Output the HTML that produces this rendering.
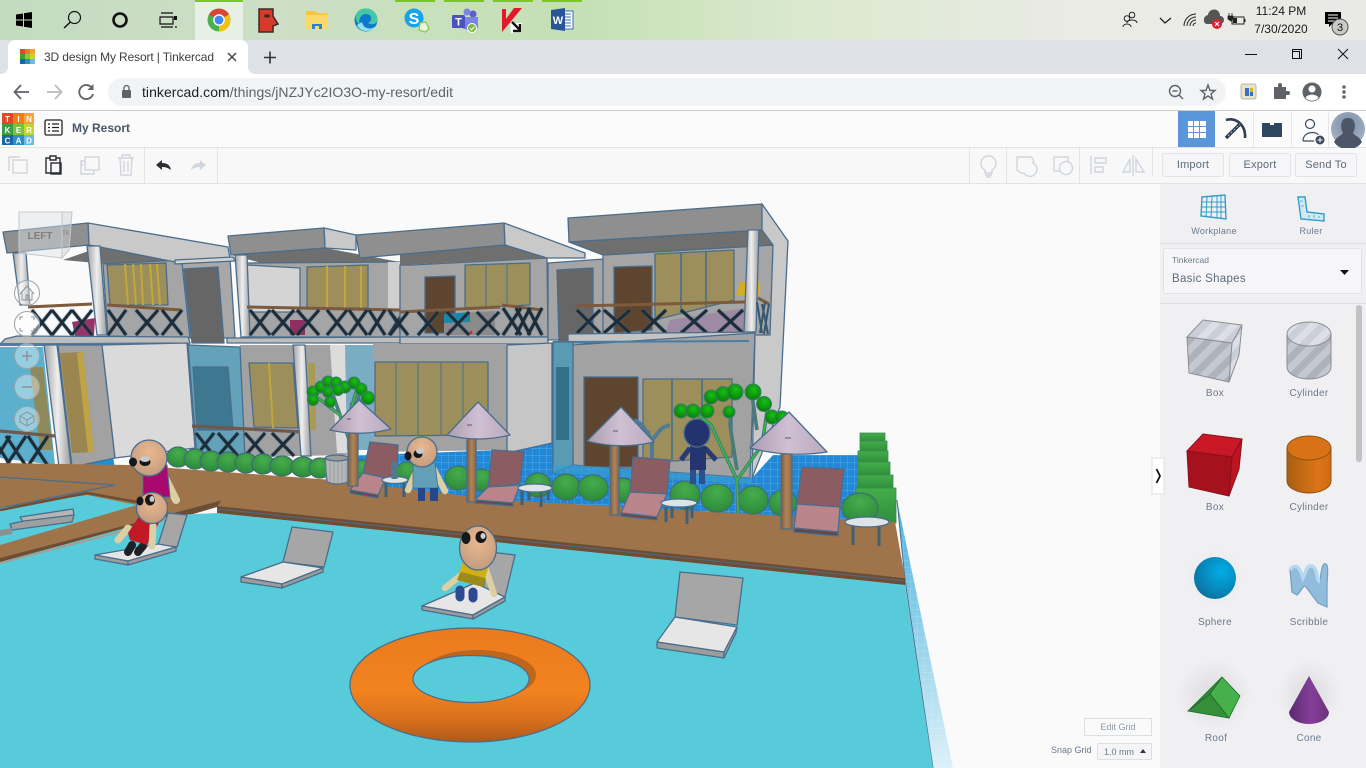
<!DOCTYPE html>
<html lang="en"><head><meta charset="utf-8"><title>3D design My Resort | Tinkercad</title>
<style>
html,body{margin:0;padding:0;width:1366px;height:768px;overflow:hidden;background:#fafafa}
svg{display:block;font-family:"Liberation Sans",sans-serif}
.s{stroke:#4a6d8c;stroke-width:1.3;stroke-linejoin:round}
.l{font-size:10px;fill:#6b7a8b;text-anchor:middle;letter-spacing:.3px}
.b{font-size:11px;fill:#5d6a7c;text-anchor:middle;letter-spacing:.2px}
.f{fill:none;stroke:#cfd6dd;stroke-width:1.4}
.d{fill:none;stroke:#2b2f33;stroke-width:1.4}
.x{fill:none;stroke:#1e2c38;stroke-width:3;filter:drop-shadow(0 0 .8px #3f6a8c)}
</style></head><body>
<svg width="1366" height="768" viewBox="0 0 1366 768" xmlns="http://www.w3.org/2000/svg">
<defs>
<linearGradient id="tb" x1="0" x2="1" y1="0" y2="0"><stop offset="0" stop-color="#c4dbc0"/><stop offset=".2" stop-color="#cddfc7"/><stop offset=".42" stop-color="#c4e0b4"/><stop offset=".6" stop-color="#dce9d0"/><stop offset=".8" stop-color="#ebebe6"/><stop offset="1" stop-color="#e9e9e5"/></linearGradient>
<linearGradient id="pil" x1="0" x2="1" y1="0" y2="0"><stop offset="0" stop-color="#a0a0a0"/><stop offset=".5" stop-color="#efefef"/><stop offset="1" stop-color="#9a9a9a"/></linearGradient>
<linearGradient id="pol" x1="0" x2="1" y1="0" y2="0"><stop offset="0" stop-color="#7d5c42"/><stop offset=".5" stop-color="#b08458"/><stop offset="1" stop-color="#8a6644"/></linearGradient>
<linearGradient id="umb" x1="0" x2="1" y1="0" y2="0"><stop offset="0" stop-color="#ab9cb0"/><stop offset=".5" stop-color="#cfc0d3"/><stop offset="1" stop-color="#b9a9be"/></linearGradient>
<radialGradient id="bush" cx=".5" cy=".3" r=".75"><stop offset="0" stop-color="#46ad4d"/><stop offset="1" stop-color="#2a8838"/></radialGradient>
<radialGradient id="ball" cx=".55" cy=".35" r=".7"><stop offset="0" stop-color="#15c015"/><stop offset="1" stop-color="#067a06"/></radialGradient>
<radialGradient id="head" cx=".5" cy=".35" r=".7"><stop offset="0" stop-color="#ebb88e"/><stop offset="1" stop-color="#c09a80"/></radialGradient>
<linearGradient id="strip" x1="0" x2="0" y1="0" y2="1"><stop offset="0" stop-color="#4aaee2"/><stop offset=".35" stop-color="#7cc8e6"/><stop offset="1" stop-color="#dcf0f8"/></linearGradient>
<linearGradient id="step" x1="0" x2="0" y1="0" y2="1"><stop offset="0" stop-color="#44ad4a"/><stop offset="1" stop-color="#2f8f3c"/></linearGradient>
<radialGradient id="sph" cx=".65" cy=".35" r=".75"><stop offset="0" stop-color="#00aee6"/><stop offset="1" stop-color="#0b6f9e"/></radialGradient>
<linearGradient id="orc" x1="0" x2="1" y1="0" y2="0"><stop offset="0" stop-color="#a85f12"/><stop offset=".7" stop-color="#dc7418"/><stop offset="1" stop-color="#d06c14"/></linearGradient>
<linearGradient id="pur" x1="0" x2="1" y1="0" y2="0"><stop offset="0" stop-color="#5a2a72"/><stop offset=".55" stop-color="#843f98"/><stop offset="1" stop-color="#6b3280"/></linearGradient>
<linearGradient id="ring" x1="0" x2="0" y1="0" y2="1"><stop offset="0" stop-color="#ea7a1e"/><stop offset=".55" stop-color="#f2831f"/><stop offset=".8" stop-color="#d9701d"/><stop offset="1" stop-color="#b05a1a"/></linearGradient>
<pattern id="hatch" width="14" height="14" patternUnits="userSpaceOnUse" patternTransform="rotate(45)"><rect width="14" height="14" fill="#c4c8d0"/><rect width="7" height="14" fill="#aeb2bb"/></pattern>
<pattern id="hatch2" width="14" height="14" patternUnits="userSpaceOnUse" patternTransform="rotate(45)"><rect width="14" height="14" fill="#dcdfe6"/><rect width="7" height="14" fill="#cbced7"/></pattern>
<pattern id="tile" width="7" height="7" patternUnits="userSpaceOnUse"><path d="M7 0H0V7" fill="none" stroke="#ffffff" stroke-opacity=".35" stroke-width=".7"/></pattern>
<radialGradient id="avt" cx=".5" cy=".35" r=".7"><stop offset="0" stop-color="#7a8ca6"/><stop offset="1" stop-color="#a9b7c9"/></radialGradient>
<radialGradient id="shd" cx=".5" cy=".5" r=".5"><stop offset="0" stop-color="#000" stop-opacity=".22"/><stop offset="1" stop-color="#000" stop-opacity="0"/></radialGradient>
</defs>

<!-- canvas -->
<rect width="1366" height="768" fill="#fafafa"/>

<!-- blue floors -->
<polygon points="60,457 113,457 115,468 60,470" fill="#1b8fd8"/>
<polygon points="340,456 505,450 552,440 573,465 752,478 773,455 858,455 878,530 400,500" fill="#2088d6"/>
<polygon points="340,456 505,450 552,440 573,465 752,478 773,455 858,455 878,530 400,500" fill="url(#tile)"/>

<!-- BLOCK 1 -->
<polygon points="63,260 100,247 175,260 107,264" fill="#6f6f6f"/>
<polygon points="103,264 182,260 190,338 108,336" fill="#a5a5a5" class="s"/>
<polygon points="107,265 166,263 168,305 110,305" fill="#9c8f5c" class="s"/>
<path d="M125 264L128 305M133 264L136 305M141 264L143 305M150 264L153 305M157 264L160 305" stroke="#c2a83a" stroke-width="2"/>
<polygon points="88,223 228,247 230,258 175,262 100,247 89,245" fill="#c9c9c9" class="s"/>
<polygon points="3,232 88,223 89,245 7,253" fill="#8f8f8f" class="s"/>
<polygon points="13,253 26,253 30,305 20,305" fill="url(#pil)" class="s"/>
<polygon points="87,246 100,246 107,335 97,335" fill="url(#pil)" class="s"/>
<polygon points="182,263 230,258 235,338 190,338" fill="#a8a8a8" class="s"/>
<polygon points="184,269 218,267 224,343 192,343" fill="#666" class="s"/>
<polygon points="175,260 233,257 235,261 175,264" fill="#d2d2d2" class="s"/>
<polygon points="72,322 95,318 94,336 75,336" fill="#96346a"/>
<path d="M28 307L92 304M107 305L181 310" stroke="#7d5a3c" stroke-width="3"/>
<path class="x" d="M32 310L52 335M52 310L32 335M52 310L72 335M72 310L52 335M72 310L92 335M92 310L72 335M108 310L126 335M126 310L108 335M136 310L158 335M158 310L136 335M162 310L182 335M182 310L162 335"/>
<polygon points="5,339 17,336 188,337 190,343 0,344" fill="#bdbdbd" class="s"/>
<rect x="0" y="343" width="190" height="3" fill="#4a7da0"/>
<polygon points="58,345 102,345 115,458 72,467" fill="#a2a2a2" class="s"/>
<polygon points="102,345 187,343 195,448 115,458" fill="#dadada" class="s"/>
<polygon points="60,353 83,352 94,452 72,453" fill="#9b8650"/>
<polygon points="77,353 83,352 94,452 88,452" fill="#bfa445"/>
<polygon points="0,347 43,347 55,465 0,458" fill="#5bb0ce"/>
<polygon points="30,367 43,367 53,450 40,450" fill="#8e8a5c"/>
<path d="M0 431L55 436" stroke="#6d5a4c" stroke-width="3.2"/>
<path class="x" d="M-8 436L10 465M10 436L-8 465M6 436L26 466M26 436L6 466M28 436L48 466M48 436L28 466"/>
<polygon points="44,345 57,345 71,465 59,467" fill="url(#pil)" class="s"/>

<!-- BLOCK 2 -->
<polygon points="231,255 325,248 400,262 273,266" fill="#6f6f6f"/>
<polygon points="247,263 400,262 400,337 247,337" fill="#a5a5a5" class="s"/>
<polygon points="247,265 300,268 300,312 247,312" fill="#d4d4d4" class="s"/>
<polygon points="388,262 400,262 400,310 388,310" fill="#cfcfcf"/>
<polygon points="307,267 368,265 368,308 307,308" fill="#9c8f5c" class="s"/>
<path d="M327 266V308M345 266V308M361 266V308" stroke="#c2a83a" stroke-width="2"/>
<polygon points="324,228 356,235 356,250 325,248" fill="#c9c9c9" class="s"/>
<polygon points="228,236 324,228 325,248 231,255" fill="#8f8f8f" class="s"/>
<polygon points="235,255 247,255 250,337 241,337" fill="url(#pil)" class="s"/>
<polygon points="290,320 305,320 305,335 290,335" fill="#8f2f5f"/>
<path d="M247 307L400 310" stroke="#7d5a3c" stroke-width="3"/>
<path class="x" d="M250 310L270 335M270 310L250 335M272 310L294 335M294 310L272 335M297 310L319 335M319 310L297 335M327 310L347 335M347 310L327 335M349 310L367 335M367 310L349 335M369 310L385 335M385 310L369 335M389 310L405 335M405 310L389 335"/>
<polygon points="227,338 400,337 400,343 227,343" fill="#bdbdbd" class="s"/>
<polygon points="240,345 345,345 347,455 245,457" fill="#a2a2a2"/>
<polygon points="249,363 293,363 298,428 254,427" fill="#9c8f5c" class="s"/>
<path d="M269 363L273 428" stroke="#c2a83a" stroke-width="2"/>
<polygon points="308,363 315,363 316,430 310,430" fill="#a99a55"/>
<polygon points="330,345 345,345 347,453 337,453" fill="#dcdcdc"/>
<polygon points="345,345 373,345 373,450 347,450" fill="#7aacc2"/>
<polygon points="188,345 240,347 245,457 197,457" fill="#64a2ba" class="s"/>
<polygon points="193,367 228,367 233,430 197,430" fill="#3e7890" class="s"/>
<path d="M192 426L303 432" stroke="#6d5a4c" stroke-width="3.2"/>
<path class="x" d="M196 433L214 456M214 433L196 456M218 433L238 456M238 433L218 456M245 433L265 456M265 433L245 456M272 433L294 456M294 433L272 456"/>
<polygon points="293,345 305,345 311,456 301,456" fill="url(#pil)" class="s"/>

<!-- MIDDLE BLOCK -->
<polygon points="412,265 547,258 548,337 400,337 400,265" fill="#a5a5a5" class="s"/>
<polygon points="400,265 547,258 505,245 400,253" fill="#6f6f6f"/>
<polygon points="504,223 585,253 585,258 547,258 505,245" fill="#c9c9c9" class="s"/>
<polygon points="356,235 504,223 505,245 360,258" fill="#8f8f8f" class="s"/>
<polygon points="425,277 455,276 455,333 425,333" fill="#5e4530" class="s"/>
<polygon points="465,265 530,263 530,305 465,308" fill="#9c8f5c" class="s"/>
<path d="M486 264V306M507 263V305" stroke="#5d7a80" stroke-width="1.4"/>
<polygon points="444,314 495,311 495,335 444,335" fill="#8a8a8a"/>
<polygon points="444,314 470,312 470,322 444,323" fill="#1b87a8"/>
<path d="M450 329V334M471 331V334M479 331V334" stroke="#d8222e" stroke-width="2.5"/>
<path d="M400 312L500 307M502 305L542 310" stroke="#7d5a3c" stroke-width="3"/>
<path class="x" d="M390 312L408 335M408 312L390 335M418 312L438 335M438 312L418 335M447 312L469 335M469 312L447 335M477 312L499 335M499 312L477 335M503 308L521 335M521 308L503 335M516 308L530 335M530 308L516 335M528 308L542 335M542 308L528 335"/>
<polygon points="400,337 548,337 548,344 400,344" fill="#bdbdbd" class="s"/>
<polygon points="373,344 507,344 507,450 373,452" fill="#a2a2a2"/>
<polygon points="507,345 552,343 552,443 507,453" fill="#c6c6c6" class="s"/>
<polygon points="375,362 488,362 488,435 375,436" fill="#9c8f5c" class="s"/>
<path d="M396 362V436M418 362V436M441 362V436M463 362V436" stroke="#5d7a80" stroke-width="1.4"/>
<polygon points="548,263 604,259 604,340 548,340" fill="#a5a5a5" class="s"/>
<polygon points="557,270 593,268 593,340 559,342" fill="#666" class="s"/>

<!-- THIRD BLOCK -->
<polygon points="762,204 788,241 780,407 752,478 755,333" fill="#c9c9c9" class="s"/>
<polygon points="603,255 773,245 770,335 568,334 603,334" fill="#a5a5a5" class="s"/>
<polygon points="569,242 762,230 773,245 603,255" fill="#6f6f6f" class="s"/>
<polygon points="568,218 762,204 762,230 569,242" fill="#8f8f8f" class="s"/>
<polygon points="655,254 734,250 734,300 655,320" fill="#9c8f5c" class="s"/>
<path d="M681 253V313M706 252V307" stroke="#4f7285" stroke-width="1.8"/>
<polygon points="614,267 652,266 652,330 614,333" fill="#5e4530" class="s"/>
<polygon points="670,320 745,308 745,333 665,333" fill="#9f8aa4"/>
<polygon points="740,282 760,282 760,296 736,296" fill="#d3ad24"/>
<polygon points="748,230 759,230 756,332 744,332" fill="url(#pil)" class="s"/>
<path d="M575 306L745 302M758 298L769 304" stroke="#7d5a3c" stroke-width="3"/>
<path class="x" d="M577 310L600 333M600 310L577 333M604 310L630 333M630 310L604 333M642 310L666 333M666 310L642 333M681 310L707 333M707 310L681 333M718 310L743 333M743 310L718 333"/>
<path d="M757 302L762 333M765 302L760 333M762 304L768 334M769 304L764 334" stroke="#37576e" stroke-width="2" fill="none"/>
<polygon points="568,334 755,332 750,343 568,343" fill="#c4c4c4" class="s"/>
<polygon points="572,345 755,333 750,478 573,465" fill="#a2a2a2" class="s"/>
<path d="M553 342L749 341" stroke="#4a7da0" stroke-width="2"/>
<polygon points="584,377 638,377 638,467 584,467" fill="#5e4530" class="s"/>
<polygon points="643,379 732,379 732,457 643,463" fill="#9c8f5c" class="s"/>
<path d="M672 379V460M702 379V458" stroke="#4f7285" stroke-width="1.8"/>
<polygon points="553,342 573,342 573,465 553,473" fill="#5a9bb3" class="s"/>
<polygon points="556,367 569,367 569,440 556,440" fill="#336f88"/>
<polygon points="553,465 573,465 752,478 752,484 553,473" fill="#3b9cd2" fill-opacity=".7"/>

<!-- green steps -->
<g fill="url(#step)" stroke="#3c8a50" stroke-width=".8">
<rect x="860" y="433" width="25" height="8"/><rect x="860" y="441" width="27" height="10"/><rect x="858" y="451" width="30" height="11"/><rect x="858" y="462" width="32" height="13"/><rect x="858" y="475" width="35" height="13"/><rect x="856" y="488" width="40" height="35"/>
</g>

<!-- deck & pool -->
<polygon points="897,500 905,580 933,768 953,768" fill="url(#strip)"/>
<polygon points="897,500 905,580 933,768 953,768" fill="url(#tile)"/>
<path d="M897 500L905 580L933 768" stroke="#4a6d8c" fill="none" stroke-width="1"/>
<polygon points="0,463 130,465 333,480 500,500 895,522 905,578 217,507 222,500 173,513 0,560" fill="#a0744a"/>
<path d="M0 477L115 485L0 508" stroke="#4a6d8c" stroke-width="1.2" fill="none"/>
<polygon points="0,508 87,495 137,505 0,545" fill="#57cbd9"/>
<path d="M0 510L87 493L137 502" stroke="#6d4d33" stroke-width="2.5" fill="none"/>
<polygon points="20,517 73,509 74,515 23,522" fill="#b5b5b5" class="s"/>
<polygon points="10,524 24,521 74,515 72,522 12,530" fill="#9f9f9f" class="s"/>
<polygon points="0,530 12,528 12,534 0,536" fill="#8f8f8f"/>
<polygon points="0,558 173,513 222,500 217,507 173,520 0,566" fill="#6d4d33"/>
<polygon points="0,562 173,515 217,513 905,585 933,768 0,768" fill="#57cbd9"/>
<polygon points="217,506 905,578 905,585 217,513" fill="#6d4d33"/>
<path d="M217 509L905 581" stroke="#4a6d8c" stroke-width="1"/>
<path d="M0 563L173 518" stroke="#9f9f94" stroke-width="2"/>

<!-- bushes -->
<g fill="url(#bush)" stroke="#3d6f70" stroke-width="1.2">
<ellipse cx="178" cy="457" rx="11" ry="10"/><ellipse cx="195" cy="459" rx="11" ry="10"/><ellipse cx="211" cy="461" rx="11" ry="10"/><ellipse cx="228" cy="462" rx="11" ry="10"/><ellipse cx="246" cy="463" rx="11" ry="10"/><ellipse cx="263" cy="464" rx="11" ry="10"/><ellipse cx="282" cy="466" rx="12" ry="10"/><ellipse cx="303" cy="467" rx="12" ry="10"/><ellipse cx="320" cy="468" rx="11" ry="10"/>
<ellipse cx="363" cy="470" rx="10" ry="10"/><ellipse cx="407" cy="472" rx="11" ry="10"/><ellipse cx="458" cy="478" rx="13" ry="12"/><ellipse cx="482" cy="480" rx="12" ry="11"/>
<ellipse cx="538" cy="485" rx="13" ry="12"/><ellipse cx="566" cy="487" rx="14" ry="13"/><ellipse cx="593" cy="488" rx="15" ry="13"/><ellipse cx="623" cy="490" rx="12" ry="12"/><ellipse cx="685" cy="495" rx="15" ry="14"/><ellipse cx="717" cy="498" rx="16" ry="14"/><ellipse cx="753" cy="500" rx="15" ry="14"/><ellipse cx="783" cy="503" rx="14" ry="13"/><ellipse cx="860" cy="508" rx="18" ry="15"/>
</g>

<!-- blue plant -->
<path d="M652 462V440M652 440L642 425M642 425L634 420M652 440L662 428M662 428L670 425M650 432L640 434" stroke="#4f7a98" stroke-width="4" fill="none"/>
<polygon points="640,464 664,464 668,470 640,470" fill="#8fbf3a"/>

<!-- navy person -->
<g class="s">
<path d="M690 448L681 460M705 448L716 460" stroke="#2a3a78" stroke-width="5" fill="none"/>
<rect x="690" y="446" width="16" height="24" fill="#25356f" stroke="none"/>
<rect x="690" y="470" width="6" height="14" fill="#2b4f8f" stroke="none"/><rect x="699" y="470" width="6" height="14" fill="#2b4f8f" stroke="none"/>
<ellipse cx="697" cy="433" rx="13" ry="14" fill="#22336f"/>
</g>

<!-- trees -->
<g fill="none" stroke="#4a7a7a" stroke-width="3.6">
<path d="M353 450L340 415L318 398M345 430L356 392M340 415L333 395M350 430L360 392M350 405L368 398"/>
<path d="M738 513L737 480L711 425L693 411M737 480L762 445L768 405M737 470L730 425L731 408M757 430L752 395"/>
</g>
<g fill="none" stroke="#32c03c" stroke-width="1.5">
<path d="M353 450L340 415L318 398M345 430L356 392M738 513L737 480L711 425L693 411M737 480L762 445L768 405"/>
</g>
<g fill="url(#ball)" stroke="#3e7a70" stroke-width="1">
<circle cx="313" cy="392" r="6"/><circle cx="321" cy="387" r="6"/><circle cx="328" cy="382" r="6"/><circle cx="336" cy="383" r="6"/><circle cx="345" cy="387" r="6"/><circle cx="354" cy="383" r="6"/><circle cx="361" cy="389" r="6"/><circle cx="368" cy="398" r="6.5"/><circle cx="313" cy="400" r="5.5"/><circle cx="330" cy="402" r="5.5"/><circle cx="328" cy="392" r="5.5"/><circle cx="338" cy="390" r="5.5"/>
<circle cx="681" cy="411" r="7"/><circle cx="693" cy="411" r="7"/><circle cx="707" cy="411" r="7"/><circle cx="711" cy="397" r="7"/><circle cx="723" cy="394" r="7.5"/><circle cx="735" cy="392" r="8"/><circle cx="753" cy="392" r="8"/><circle cx="764" cy="404" r="7.5"/><circle cx="729" cy="412" r="6"/><circle cx="772" cy="417" r="7"/><circle cx="782" cy="418" r="7"/>
</g>

<!-- trash -->
<path d="M325 458Q337 453 348 458V482Q337 486 327 482Z" fill="#b6b8b8" class="s"/>
<path d="M326 462V482M330 462V484M334 462V484M338 462V484M342 462V484M346 462V483" stroke="#8a8c8c" stroke-width=".6"/>
<ellipse cx="337" cy="458" rx="11.5" ry="3" fill="#9a9c9c" class="s"/>

<!-- chairs pink -->
<g class="s">
<polygon points="370,442 398,445 397,472 387,478 363,473" fill="#8b5c62"/>
<polygon points="363,473 386,478 378,495 350,490" fill="#ba858a"/><polygon points="350,490 378,495 378,498 350,493" fill="#65464d"/>
<polygon points="492,450 524,452 520,483 488,489" fill="#8b5c62"/>
<polygon points="488,487 520,485 513,503 475,500" fill="#ba858a"/><polygon points="475,500 513,503 513,506 475,503" fill="#65464d"/>
<polygon points="633,457 670,460 667,494 630,492" fill="#8b5c62"/>
<polygon points="630,492 667,494 657,517 621,513" fill="#ba858a"/><polygon points="621,513 657,517 657,520 621,516" fill="#65464d"/>
<polygon points="802,467 844,469 840,507 797,504" fill="#8b5c62"/>
<polygon points="797,504 840,507 838,532 794,528" fill="#ba858a"/><polygon points="794,528 838,532 838,536 794,532" fill="#65464d"/>
</g>

<!-- umbrellas -->
<g>
<rect x="348" y="430" width="10" height="56" fill="url(#pol)" class="s"/>
<path d="M359 400L391 429Q360 437 330 430Z" fill="url(#umb)" class="s"/>
<rect x="467" y="435" width="9" height="67" fill="url(#pol)" class="s"/>
<path d="M478 402L510 435Q478 443 447 435Z" fill="url(#umb)" class="s"/>
<rect x="610" y="442" width="9" height="73" fill="url(#pol)" class="s"/>
<path d="M621 407L654 442Q620 450 587 441Z" fill="url(#umb)" class="s"/>
<rect x="781" y="452" width="11" height="77" fill="url(#pol)" class="s"/>
<path d="M789 412L827 452Q788 458 750 448Z" fill="url(#umb)" class="s"/>
<path d="M347 419h4M467 425h5M613 431h5M785 438h6" stroke="#5a5a66" stroke-width="1"/>
</g>

<!-- tables -->
<g stroke="#3f5f75" stroke-width="3" fill="none">
<path d="M386 483V497M404 483V497"/><path d="M522 491V505M541 491V507M529 491V500M548 491V500"/>
<path d="M666 507V522M687 507V524M672 507V518M692 507V518"/><path d="M853 526V545M879 526V546"/>
</g>
<g fill="#dfe3e6" class="s">
<ellipse cx="395" cy="480" rx="13" ry="3.5"/><ellipse cx="535" cy="488" rx="17" ry="4"/><ellipse cx="679" cy="503" rx="18" ry="4"/><ellipse cx="867" cy="522" rx="22" ry="5"/>
</g>
<rect x="391" y="462" width="7" height="17" rx="2" fill="#54798f"/>

<!-- white loungers -->
<g class="s">
<polygon points="168,513 187,515 177,547 158,545" fill="#a6a6a6"/>
<polygon points="158,544 176,547 128,561 95,555" fill="#e6e6e6"/><polygon points="95,555 128,561 128,565 95,559" fill="#9c9c9c"/><polygon points="128,561 176,547 176,551 128,565" fill="#9c9c9c"/>
<polygon points="292,527 333,532 324,567 283,562" fill="#a6a6a6"/>
<polygon points="283,562 323,568 282,584 241,577" fill="#e6e6e6"/><polygon points="241,577 282,584 282,588 241,582" fill="#9c9c9c"/><polygon points="282,584 323,568 323,572 282,588" fill="#9c9c9c"/>
<polygon points="490,552 515,555 505,597 482,595" fill="#a6a6a6"/>
<polygon points="475,583 505,597 473,615 422,606" fill="#e6e6e6"/><polygon points="422,606 473,615 473,619 422,610" fill="#9c9c9c"/><polygon points="473,615 505,597 505,601 473,619" fill="#9c9c9c"/>
<polygon points="680,572 743,578 737,625 675,617" fill="#a6a6a6"/>
<polygon points="675,617 737,627 724,652 657,642" fill="#e6e6e6"/><polygon points="657,642 724,652 724,658 657,648" fill="#9c9c9c"/><polygon points="724,652 737,627 736,633 724,658" fill="#9c9c9c"/>
</g>

<!-- people -->
<path d="M165 478L176 500" stroke="#dccfa4" stroke-width="8" stroke-linecap="round"/>
<polygon points="143,470 167,465 170,497 143,497" fill="#a7096e" stroke="#4a6d8c" stroke-width="1"/>
<circle cx="149" cy="458" r="18" fill="url(#head)" class="s" stroke-width="1.6"/>
<ellipse cx="133" cy="462" rx="4" ry="4.5" fill="#14181c"/><ellipse cx="145" cy="462" rx="5.5" ry="4" fill="#14181c"/><ellipse cx="145" cy="459" rx="5" ry="3" fill="#c9c9c9"/>

<path d="M128 528L118 540" stroke="#dccfa4" stroke-width="7" stroke-linecap="round"/>
<path d="M132 545L128 552M143 546L138 552" stroke="#1d2024" stroke-width="8" stroke-linecap="round"/>
<polygon points="128,533 140,515 162,517 147,545 130,540" fill="#bf1a26"/>
<path d="M153 526L152 546" stroke="#dccfa4" stroke-width="7" stroke-linecap="round"/>
<circle cx="152" cy="508" r="15.5" fill="url(#head)" class="s" stroke-width="1.4"/>
<ellipse cx="140" cy="501" rx="3.5" ry="4.5" fill="#14181c"/><ellipse cx="150" cy="500" rx="5" ry="5.5" fill="#14181c"/><ellipse cx="152" cy="499" rx="2.5" ry="3" fill="#c9c9c9"/>

<path d="M417 470L408 490M433 468L445 491" stroke="#dccfa4" stroke-width="6.5" stroke-linecap="round"/>
<polygon points="413,465 435,463 438,488 413,488" fill="#62a0b8" stroke="#4a6d8c" stroke-width=".8"/>
<rect x="418" y="488" width="7" height="13" fill="#25488a"/><rect x="430" y="488" width="8" height="13" fill="#25488a"/>
<circle cx="422" cy="452" r="15" fill="url(#head)" class="s" stroke-width="1.4"/>
<ellipse cx="408" cy="456" rx="3.5" ry="4.5" fill="#14181c"/><ellipse cx="418" cy="454" rx="4.5" ry="4" fill="#14181c"/><ellipse cx="420" cy="451" rx="4" ry="3" fill="#c9c9c9"/>

<path d="M465 572L445 588M486 570L494 594" stroke="#dccfa4" stroke-width="6.5" stroke-linecap="round"/>
<path d="M460 590L460 597M473 592L473 598" stroke="#2d4a90" stroke-width="9" stroke-linecap="round"/>
<polygon points="465,555 492,553 483,587 457,580" fill="#cfb015"/>
<path d="M457 580L483 587L485 578L461 572Z" fill="#9e8a18"/>
<ellipse cx="478" cy="548" rx="18.5" ry="22" fill="url(#head)" class="s" stroke-width="1.4"/>
<ellipse cx="466" cy="538" rx="4.5" ry="6" fill="#14181c"/><ellipse cx="481" cy="537" rx="5.5" ry="6" fill="#14181c"/><ellipse cx="483" cy="536" rx="2.5" ry="3" fill="#d0d0d0"/>

<!-- ring -->
<ellipse cx="470" cy="685" rx="120" ry="57" fill="url(#ring)" class="s"/>
<ellipse cx="478" cy="675" rx="58" ry="25" fill="#bf661d"/>
<ellipse cx="471" cy="679" rx="58" ry="23.5" fill="#57cbd9" stroke="#4a6d8c" stroke-width="1.2"/>

<!-- nav cube -->
<g>
<polygon points="19,212 62,212 62,258 19,253" fill="#dfe3e6" fill-opacity=".45" stroke="#c4c8cc"/>
<polygon points="62,212 72,212 69,250 62,258" fill="#cfd3d6" fill-opacity=".5" stroke="#c4c8cc"/>
<text x="40" y="239" font-size="10" font-weight="bold" fill="#7f7f7f" text-anchor="middle">LEFT</text>
<text x="66" y="235" font-size="6" fill="#7f7f7f" text-anchor="middle">TK</text>
</g>
<g fill="#ffffff" fill-opacity=".38" stroke="#9ba3aa" stroke-width="1">
<circle cx="27" cy="293" r="12.5"/><circle cx="27" cy="324" r="12.5"/><circle cx="27" cy="356" r="12.5"/><circle cx="27" cy="387" r="12.5"/><circle cx="27" cy="419" r="12.5"/>
</g>
<g fill="none" stroke="#8a9299" stroke-width="1">
<path d="M20 294L27 286L34 294M22 293V300H32V293M26 300V295H28V300"/>
<path d="M20 320V317H23M31 317H34V320M34 328V331H31M23 331H20V328"/>
<path d="M22 356H32M27 351V361M22 387H32" stroke-width="1.5"/>
<path d="M27 412L34 416V422L27 426L20 422V416ZM20 416L27 420L34 416M27 420V426"/>
</g>

<!-- bottom right canvas controls -->
<rect x="1084.5" y="718.5" width="67" height="17" fill="#fafafa" stroke="#dcdfe3"/>
<text x="1118" y="730" font-size="9" fill="#8e98a4" text-anchor="middle">Edit Grid</text>
<text x="1051" y="753" font-size="9" fill="#6b7a8b">Snap Grid</text>
<rect x="1097.5" y="743.5" width="54" height="16" rx="1" fill="#f5f5f7" stroke="#dcdfe3"/>
<text x="1104" y="755" font-size="9" fill="#6b7a8b">1.0 mm</text>
<path d="M1140 753L1143 749L1146 753Z" fill="#333"/>

<!-- right panel -->
<rect x="1160" y="184" width="206" height="584" fill="#f0f0f3"/>
<rect x="1152" y="458" width="12" height="36" fill="#fff" stroke="#dfe2e6"/>
<path d="M1156.5 469L1160 476L1156.5 483" fill="none" stroke="#111" stroke-width="1.8"/>
<rect x="1160" y="243" width="206" height="1" fill="#dcdfe3"/>
<rect x="1160" y="303" width="206" height="1" fill="#dcdfe3"/>
<g fill="none" stroke="#2f9fc9" stroke-width="1">
<polygon points="1202,197 1225,195 1226,219 1201,216" stroke-width="1.4"/>
<path d="M1207 197L1206 217M1212 196.5L1211 218M1217 196V218M1221 195.5V219M1201.5 202H1225.5M1201.5 207H1225.5M1201 212H1226"/>
</g>
<polygon points="1298,197 1305,197 1307,212 1324,214 1324,221 1301,219" fill="#d6e8f2" stroke="#2f9fc9" stroke-width="1.4"/>
<path d="M1300 201H1303M1301 206H1304M1309 215V218M1314 215V218M1319 216V218" stroke="#2f9fc9" stroke-width=".8"/>
<text class="l" x="1214" y="234" style="font-size:9px">Workplane</text>
<text class="l" x="1311" y="234" style="font-size:9px">Ruler</text>
<rect x="1163.5" y="248.5" width="198" height="45" rx="2" fill="#f6f6f8" stroke="#e0e2e6"/>
<text x="1172" y="263" font-size="8.5" fill="#6b7a8b">Tinkercad</text>
<text x="1172" y="282" font-size="11.5" fill="#5d6a7c" letter-spacing=".3">Basic Shapes</text>
<path d="M1340 270H1349L1344.5 275Z" fill="#111"/>
<rect x="1356" y="305" width="6" height="157" rx="3" fill="#c2c2c2"/>

<!-- shapes -->
<polygon points="1187,337 1203,320 1242,325 1232,343" fill="url(#hatch2)" stroke="#8a8d94"/>
<polygon points="1187,337 1232,343 1229,382 1189,373" fill="url(#hatch)" stroke="#8a8d94"/>
<polygon points="1232,343 1242,325 1239,355 1229,382" fill="url(#hatch2)" stroke="#8a8d94"/>
<path d="M1287 334V367A22 12 0 0 0 1331 367V334Z" fill="url(#hatch)" stroke="#8a8d94"/>
<ellipse cx="1309" cy="334" rx="22" ry="12" fill="url(#hatch2)" stroke="#8a8d94"/>
<text class="l" x="1215" y="396">Box</text><text class="l" x="1309" y="396">Cylinder</text>

<polygon points="1187,451 1203,434 1242,439 1232,457" fill="#c81726" stroke="#8a0f1a"/>
<polygon points="1187,451 1232,457 1229,496 1189,487" fill="#a5121d" stroke="#8a0f1a"/>
<polygon points="1232,457 1242,439 1239,469 1229,496" fill="#bb1522" stroke="#8a0f1a"/>
<path d="M1287 448V481A22 12 0 0 0 1331 481V448Z" fill="url(#orc)" stroke="#8f5510"/>
<ellipse cx="1309" cy="448" rx="22" ry="12" fill="#d97216" stroke="#8f5510"/>
<text class="l" x="1215" y="510">Box</text><text class="l" x="1309" y="510">Cylinder</text>

<ellipse cx="1215" cy="578" rx="30" ry="30" fill="url(#shd)" opacity=".18"/>
<circle cx="1215" cy="578" r="21" fill="url(#sph)"/>
<path d="M1290 570C1296 562 1300 568 1303 578C1306 572 1306 565 1312 566C1318 568 1316 580 1320 582C1321 572 1322 562 1326 564C1329 566 1327 576 1327 590V607L1318 603L1306 587C1303 584 1301 592 1297 595L1292 592Z" fill="#92bcdc" stroke="#6fa0c6" stroke-width="1.2"/>
<path d="M1290 570C1296 562 1300 568 1303 578C1306 572 1306 565 1312 566C1318 568 1316 580 1320 582" fill="none" stroke="#b8d8ef" stroke-width="3.5"/>
<text class="l" x="1215" y="625">Sphere</text><text class="l" x="1309" y="625">Scribble</text>

<ellipse cx="1214" cy="695" rx="38" ry="36" fill="url(#shd)" opacity=".4"/>
<ellipse cx="1309" cy="695" rx="32" ry="36" fill="url(#shd)" opacity=".4"/>
<polygon points="1222,677 1240,696 1229,718 1210,694" fill="#46b04a" stroke="#1f6a2a" stroke-width=".8"/>
<polygon points="1188,711 1222,677 1210,694" fill="#2f8a36" stroke="#1f6a2a" stroke-width=".8"/>
<polygon points="1188,711 1210,694 1229,718" fill="#358f3b" stroke="#1f6a2a" stroke-width=".8"/>
<path d="M1309 676L1329 712A20 12 0 0 1 1289 712Z" fill="url(#pur)"/>
<text class="l" x="1216" y="741">Roof</text><text class="l" x="1309" y="741">Cone</text>

<!-- taskbar -->
<rect width="1366" height="40" fill="url(#tb)"/>
<rect x="195" y="0" width="48" height="40" fill="#e6f0e5"/>
<rect x="195" y="0" width="48" height="2" fill="#7dc820"/>
<rect x="395" y="0" width="40" height="2" fill="#7dc820"/><rect x="444" y="0" width="40" height="2" fill="#7dc820"/><rect x="493" y="0" width="40" height="2" fill="#7dc820"/><rect x="542" y="0" width="40" height="2" fill="#7dc820"/>
<path d="M16 14.5L23 13.5V19.5H16ZM24 13.3L32 12V19.5H24ZM16 20.5H23V26.5L16 25.5ZM24 20.5H32V28L24 26.7Z" fill="#000"/>
<circle cx="74.5" cy="17.5" r="6" fill="none" stroke="#111" stroke-width="1.2"/><path d="M70.5 22L64 28" stroke="#111" stroke-width="1.5"/>
<circle cx="120" cy="20" r="6.5" fill="none" stroke="#111" stroke-width="2.6"/>
<path d="M161 13H173M160 17H173V24H160ZM161 27H173M176 26V28" fill="none" stroke="#111" stroke-width="1.2"/>
<rect x="174" y="16" width="3" height="4" fill="#111"/>
<!-- chrome -->
<circle cx="219" cy="20" r="11.5" fill="#4caf50"/>
<path d="M219 20L209 14.5A11.5 11.5 0 0 1 229 14.5Z" fill="#db4437"/>
<path d="M219 20L229 14.5A11.5 11.5 0 0 1 219 31.5Z" fill="#f4c20d"/>
<circle cx="219" cy="20" r="5.8" fill="#fff"/><circle cx="219" cy="20" r="4.4" fill="#4285f4"/>
<!-- red app -->
<path d="M259 9H273L273 16L278 24L273 26V32H259Z" fill="#d8392a" stroke="#3b2a28" stroke-width="1.5"/>
<ellipse cx="267" cy="16" rx="3" ry="1.8" fill="#3b2a28"/>
<!-- folder -->
<path d="M306 11H315L317 13H328V29H306Z" fill="#f6c744"/><path d="M306 15H328V29H306Z" fill="#fbd968"/>
<path d="M312 29V24H322V29H319V26H315V29Z" fill="#2b83c6"/>
<!-- edge -->
<circle cx="366" cy="20" r="11.5" fill="#0f78c8"/>
<path d="M356 14C361 5 376 7 377.5 19C378 25 371 25 368 23C373 21 372 14 366 14C361 14 358 19 360 25C356 22 355 18 356 14Z" fill="#43c7a5"/>
<path d="M362 22C363 28 370 31 376 26C372 33 360 33 357 25Z" fill="#8fe0f0"/>
<!-- skype -->
<circle cx="414" cy="18" r="9.5" fill="#1aa3e8"/>
<text x="414" y="24" font-size="16" font-weight="bold" fill="#fff" text-anchor="middle">S</text>
<path d="M420 23L426 22L429 29L425 32L419 30Z" fill="#eaf3dc" stroke="#8cc63e" stroke-width="1.2"/>
<!-- teams -->
<circle cx="473" cy="14" r="3.5" fill="#5b5fc7"/><circle cx="467" cy="12" r="3.5" fill="#7b83eb"/>
<path d="M462 17H478V28Q470 32 462 28Z" fill="#7b83eb"/>
<rect x="452" y="15" width="13" height="13" rx="1" fill="#4b53bc"/>
<text x="458.5" y="25.5" font-size="11" font-weight="bold" fill="#fff" text-anchor="middle">T</text>
<circle cx="472" cy="28" r="4.5" fill="#7fba3c" stroke="#fff"/>
<path d="M470 28L471.5 30L474.5 26.5" stroke="#fff" fill="none"/>
<!-- kaspersky -->
<path d="M502 9H506V19L514 8H522L512 20L502 32Z" fill="#e4172b"/>
<path d="M510 23L522 23V33H511Z" fill="#fff"/><path d="M512 22L520 30M520 24V31H513" stroke="#111" stroke-width="2.4" fill="none"/>
<!-- word -->
<rect x="555" y="11" width="18" height="18" fill="#fff" stroke="#3a6fb5"/>
<path d="M563 14H571M563 17H571M563 20H571M563 23H571M563 26H571" stroke="#3a6fb5"/>
<polygon points="551,10 565,8 565,31 551,29" fill="#2a5699"/>
<text x="558" y="24" font-size="11" font-weight="bold" fill="#fff" text-anchor="middle">W</text>
<!-- tray -->
<g fill="none" stroke="#222" stroke-width="1">
<circle cx="1132" cy="15" r="2.8"/><path d="M1127 23C1127 19 1137 19 1137 23"/><circle cx="1127" cy="18.5" r="2.8"/><path d="M1123 27C1123 23 1131 23 1131 27"/>
<path d="M1160 18L1165 23L1171 18" stroke-width="1.3"/>
<path d="M1184 26A12 12 0 0 1 1196 14M1187 26A9 9 0 0 1 1196 17M1190 26A6 6 0 0 1 1196 20M1193 26A3 3 0 0 1 1196 23"/>
</g>
<path d="M1206 24A5 5 0 0 1 1208 15A6 6 0 0 1 1220 16A4 4 0 0 1 1220 24Z" fill="#555"/>
<circle cx="1217" cy="24" r="5" fill="#e0202f"/><path d="M1215 22L1219 26M1219 22L1215 26" stroke="#fff"/>
<rect x="1232" y="17" width="12" height="7" fill="none" stroke="#222"/><rect x="1233" y="18" width="4" height="5" fill="#222"/><rect x="1244" y="19" width="1.5" height="3" fill="#222"/>
<path d="M1229 13V16M1232 13V16M1228 16H1233V19L1231 21L1228 19Z" fill="#222" stroke="#222" stroke-width=".8"/>
<text x="1281" y="15" font-size="12" fill="#1a1a1a" text-anchor="middle">11:24 PM</text>
<text x="1281" y="33" font-size="12" fill="#1a1a1a" text-anchor="middle">7/30/2020</text>
<path d="M1325 12H1341V24H1332L1329 27V24H1325Z" fill="#000"/><path d="M1328 15H1338M1328 18H1338M1328 21H1336" stroke="#fff"/>
<circle cx="1340" cy="27" r="8" fill="#c9c9c7" stroke="#555"/>
<text x="1340" y="31" font-size="11" fill="#111" text-anchor="middle">3</text>

<!-- tab bar -->
<rect y="40" width="1366" height="34" fill="#dee1e6"/>
<path d="M0 74Q8 74 8 66V48Q8 40 16 40H240Q248 40 248 48V66Q248 74 256 74Z" fill="#fff"/>
<g>
<rect x="20" y="49" width="5" height="5" fill="#e8452c"/><rect x="25" y="49" width="5" height="5" fill="#f47a20"/><rect x="30" y="49" width="5" height="5" fill="#f7a03c"/>
<rect x="20" y="54" width="5" height="5" fill="#3c9e3e"/><rect x="25" y="54" width="5" height="5" fill="#8cc63e"/><rect x="30" y="54" width="5" height="5" fill="#c8d42e"/>
<rect x="20" y="59" width="5" height="5" fill="#1767a8"/><rect x="25" y="59" width="5" height="5" fill="#2d8ccb"/><rect x="30" y="59" width="5" height="5" fill="#6cb9e2"/>
</g>
<text x="44" y="61" font-size="12" fill="#3c4043" textLength="170" lengthAdjust="spacing">3D design My Resort | Tinkercad</text>
<path d="M228 53L236 61M236 53L228 61" stroke="#444" stroke-width="1.5"/>
<path d="M264 57.5H276M270 51.5V63.5" stroke="#333" stroke-width="1.6"/>
<path d="M1245 54.5H1257" stroke="#111"/>
<path d="M1292.5 51.5V49.5H1301.5V58.5H1299.5M1292.5 51.5H1299.5V58.5H1292.5Z" fill="none" stroke="#111"/>
<path d="M1338 49L1348 59M1348 49L1338 59" stroke="#111"/>

<!-- address bar -->
<rect y="74" width="1366" height="36" fill="#fff"/>
<rect y="110" width="1366" height="1" fill="#ccc"/>
<rect x="108" y="78" width="1118" height="28" rx="14" fill="#f1f3f4"/>
<path d="M29 92H15M21 85L14.5 92L21 99" fill="none" stroke="#5f6368" stroke-width="1.8"/>
<path d="M47 92H61M55 85L61.5 92L55 99" fill="none" stroke="#b8bbbf" stroke-width="1.8"/>
<path d="M92 88A7 7 0 1 0 93 94" fill="none" stroke="#5f6368" stroke-width="1.8"/><path d="M93.5 84V90H87.5Z" fill="#5f6368"/>
<rect x="122" y="90" width="9" height="8" rx="1" fill="#5f6368"/><path d="M124 90V88A2.5 2.5 0 0 1 129 88V90" fill="none" stroke="#5f6368" stroke-width="1.3"/>
<text x="142" y="97" font-size="14" fill="#5f6368" textLength="311" lengthAdjust="spacing"><tspan fill="#202124">tinkercad.com</tspan>/things/jNZJYc2IO3O-my-resort/edit</text>
<circle cx="1175" cy="91" r="5.5" fill="none" stroke="#5f6368" stroke-width="1.4"/><path d="M1172.5 91H1177.5M1179 95L1183 99" stroke="#5f6368" stroke-width="1.4"/>
<path d="M1208 85L1210 90.5L1215 90.5L1211 94L1212.5 99L1208 96L1203.5 99L1205 94L1201 90.5L1206 90.5Z" fill="none" stroke="#5f6368" stroke-width="1.4"/>
<rect x="1241" y="84" width="15" height="15" rx="2" fill="#e9e3c8" stroke="#b7b7b0"/><path d="M1245 88H1249V96H1245ZM1250 88H1253V96H1250Z" fill="#3b6fc4"/><rect x="1250" y="88" width="3" height="4" fill="#d7b52b"/>
<path d="M1274 87H1278V85A2 2 0 0 1 1282 85V87H1286V91H1288A2 2 0 0 1 1288 95H1286V99H1274Z" fill="#5f6368"/>
<circle cx="1312" cy="92" r="9.5" fill="#5f6368"/><circle cx="1312" cy="89" r="3.5" fill="#fff"/><path d="M1305.5 98C1307 93.5 1317 93.5 1318.5 98A9 9 0 0 1 1305.5 98Z" fill="#fff"/>
<circle cx="1344" cy="87" r="1.7" fill="#5f6368"/><circle cx="1344" cy="92" r="1.7" fill="#5f6368"/><circle cx="1344" cy="97" r="1.7" fill="#5f6368"/>

<!-- tinkercad header -->
<rect y="111" width="1366" height="36" fill="#fbfbfb"/>
<rect y="147" width="1366" height="1" fill="#e0e2e6"/>
<g font-size="8" font-weight="bold" fill="#fff" text-anchor="middle">
<rect x="2" y="113" width="11" height="11" fill="#e8452c"/><text x="7.5" y="122">T</text>
<rect x="13" y="113" width="11" height="11" fill="#f47a20"/><text x="18.5" y="122">I</text>
<rect x="24" y="113" width="10" height="11" fill="#f7a03c"/><text x="29" y="122">N</text>
<rect x="2" y="124" width="11" height="11" fill="#3c9e3e"/><text x="7.5" y="133">K</text>
<rect x="13" y="124" width="11" height="11" fill="#7fbe3e"/><text x="18.5" y="133">E</text>
<rect x="24" y="124" width="10" height="11" fill="#c8d42e"/><text x="29" y="133">R</text>
<rect x="2" y="135" width="11" height="10" fill="#1767a8"/><text x="7.5" y="143.5">C</text>
<rect x="13" y="135" width="11" height="10" fill="#2d8ccb"/><text x="18.5" y="143.5">A</text>
<rect x="24" y="135" width="10" height="10" fill="#6cb9e2"/><text x="29" y="143.5">D</text>
</g>
<rect x="45" y="120" width="17" height="15" rx="1.5" fill="none" stroke="#222" stroke-width="1.3"/>
<path d="M48 124H50M52 124H59M48 127.5H50M52 127.5H59M48 131H50M52 131H59" stroke="#222" stroke-width="1.3"/>
<text x="72" y="132" font-size="12" font-weight="bold" fill="#4a5669" textLength="58" lengthAdjust="spacing">My Resort</text>
<rect x="1178" y="111" width="37" height="36" fill="#5b95da"/>
<g fill="#fff"><rect x="1188" y="121" width="5" height="5"/><rect x="1194" y="121" width="5" height="5"/><rect x="1200" y="121" width="6" height="5"/><rect x="1188" y="127" width="5" height="5"/><rect x="1194" y="127" width="5" height="5"/><rect x="1200" y="127" width="6" height="5"/><rect x="1188" y="133" width="5" height="5"/><rect x="1194" y="133" width="5" height="5"/><rect x="1200" y="133" width="6" height="5"/></g>
<path d="M1226 138L1241 123" stroke="#2c3e50" stroke-width="3.5"/>
<path d="M1226 120C1236 117 1246 125 1245 138" fill="none" stroke="#2c3e50" stroke-width="2.6"/>
<path d="M1228 136L1240 124" stroke="#c9d0d6" stroke-width=".8" stroke-dasharray="2 2"/>
<rect x="1253" y="111" width="1" height="36" fill="#e5e7ea"/><rect x="1291" y="111" width="1" height="36" fill="#e5e7ea"/><rect x="1328" y="111" width="1" height="36" fill="#e5e7ea"/>
<path d="M1262 126V123H1270V125H1274V123H1282V137H1262Z" fill="#2f4660"/>
<circle cx="1310" cy="124" r="4.5" fill="none" stroke="#3c4a5c" stroke-width="1.2"/>
<path d="M1303 141C1303 131 1317 131 1318 135M1303 141H1314" fill="none" stroke="#3c4a5c" stroke-width="1.2"/>
<circle cx="1320" cy="140" r="4.5" fill="#3c4a5c"/><path d="M1317.5 140H1322.5M1320 137.5V142.5" stroke="#fff"/>
<circle cx="1348" cy="129" r="17" fill="url(#avt)"/>
<path d="M1334 142C1337 136 1341 136 1343 133C1340 128 1340 118 1348 118C1356 118 1356 128 1353 133C1355 136 1359 136 1362 142A17 17 0 0 1 1334 142Z" fill="#4c5668"/>

<!-- toolbar -->
<rect y="148" width="1366" height="35" fill="#f8f8f9"/>
<rect y="183" width="1366" height="1" fill="#e0e2e6"/>
<rect x="144" y="148" width="1" height="35" fill="#e2e4e8"/><rect x="217" y="148" width="1" height="35" fill="#e2e4e8"/>
<rect x="969" y="148" width="1" height="35" fill="#e2e4e8"/><rect x="1006" y="148" width="1" height="35" fill="#e2e4e8"/><rect x="1079" y="148" width="1" height="35" fill="#e2e4e8"/><rect x="1152" y="148" width="1" height="28" fill="#e2e4e8"/>
<path class="f" d="M9 171V157H20"/><rect class="f" x="13" y="160" width="14" height="13"/>
<path class="d" d="M46 158H50V156H56V158H60V173H46Z"/><rect class="d" x="51" y="163" width="10" height="11"/><path class="d" d="M50 158V160H56V158"/>
<rect class="f" x="85" y="157" width="14" height="13"/><path class="f" d="M85 161H81V174H94V170"/><path class="f" d="M83 164L81 166"/>
<path class="f" d="M118 158H134M122 158V155H130V158M120 158L121 175H131L132 158M124 161V172M128 161V172"/>
<path d="M156 165L162 160V163C167 163 170 165 171 170C168 168 166 167 162 167V170Z" fill="#2b2f33"/>
<path d="M206 165L200 160V163C195 163 192 165 191 170C194 168 196 167 200 167V170Z" fill="#cfd6dd"/>
<path class="f" d="M985 170A7.5 7.5 0 1 1 992 170V173H985ZM985 175H992M986 177H991"/>
<path class="f" d="M1017 157H1031C1034 160 1034 162 1033 163A7 7 0 1 1 1024 173H1021L1017 170Z"/>
<rect class="f" x="1054" y="157" width="14" height="14"/><circle class="f" cx="1066" cy="168" r="6.5" style="fill:#f8f8f9"/>
<path class="f" d="M1091 156V174M1095 158H1106V163H1095ZM1095 167H1103V172H1095Z"/>
<path class="f" d="M1133 155V176M1130 159V172H1123ZM1136 159V172H1144Z"/>
<g fill="#f6f6f8" stroke="#e2e4e8">
<rect x="1162.5" y="153.5" width="61" height="23" rx="2"/><rect x="1229.5" y="153.5" width="61" height="23" rx="2"/><rect x="1295.5" y="153.5" width="61" height="23" rx="2"/>
</g>
<text class="b" x="1193" y="168">Import</text><text class="b" x="1260" y="168">Export</text><text class="b" x="1326" y="168">Send To</text>
</svg>
</body></html>
